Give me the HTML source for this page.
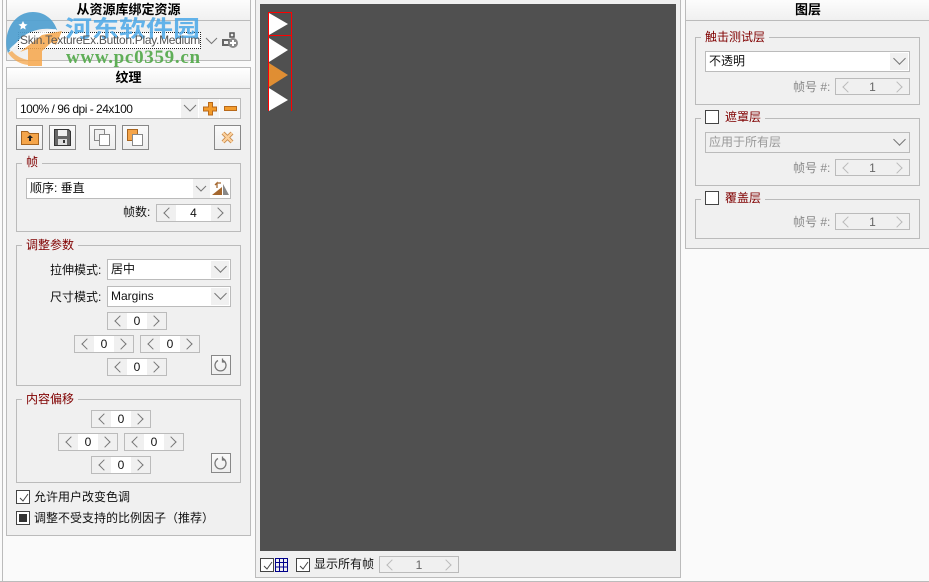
<!DOCTYPE html>
<html><head><meta charset="utf-8"><style>
html,body{margin:0;padding:0;width:929px;height:582px;overflow:hidden;background:#fafafa}
body{position:relative;font:12px/16px "Liberation Sans","Noto Sans CJK SC",sans-serif;color:#111}
div,span,svg{position:absolute;box-sizing:border-box}
.p{background:#f0f0f0;border:1px solid #bbb}
.h{background:linear-gradient(#fff,#f0f0f0);border-bottom:1px solid #bbb;text-align:center;font-weight:bold;font-size:13px;left:0;right:0;color:#000}
.g{border:1px solid #bbb}
.l{color:#800000;background:#f0f0f0;padding:0 4px;white-space:nowrap;line-height:14px}
.c{background:#fff;border:1px solid #bbb;padding-left:3px;line-height:19px;white-space:nowrap}
.c i{position:absolute;right:1px;top:1px;bottom:1px;width:18px;background:#f0f0f0}
.c i:after,.s b:after,.s u:after{content:"";position:absolute;border:solid #777;border-width:0 0 1px 1px}
.c i:after{left:5px;top:1px;width:8px;height:8px;transform:rotate(-45deg)}
.s{background:#fff;border:1px solid #bbb;text-align:center;line-height:17px;font-size:12px}
.s b,.s u{position:absolute;top:0;bottom:0;width:19px;background:#f0f0f0}
.s b{left:0}.s u{right:0}
.s b:after{left:8px;top:4px;width:7px;height:7px;transform:rotate(45deg)}
.s u:after{left:3px;top:4px;width:7px;height:7px;transform:rotate(-135deg)}
.d{background:#f0f0f0;color:#666}.d b:after,.d u:after{border-color:#bbb}
.t{white-space:nowrap;line-height:16px}
.gy{color:#888}
.b{background:linear-gradient(#fafafa,#eee);border:1px solid #888}
.k{background:#fff;border:1px solid #444;width:14px;height:14px}
.k svg{left:1px;top:1px}
</style></head><body>

<div style="left:2px;top:-2px;width:1px;height:584px;background:#bbb"></div>
<div style="left:0;top:581px;width:929px;height:1px;background:#bbb"></div>
<div class="p" style="left:6px;top:-5px;width:245px;height:66px"><div class="h" style="top:0;height:25px;padding-top:6px">从资源库绑定资源</div></div>
<div style="left:18px;top:32px;width:183px;height:17px;border:1px dotted #222;background:#fff"></div>
<div style="left:204px;top:32px;width:16px;height:17px;background:#f0f0f0"></div>
<svg style="left:204px;top:31px" width="40" height="20" fill="none"><path d="M2 7l5.500 5.500L13 7" stroke="#777"/><rect x="19" y="9" width="6" height="5" stroke="#666" stroke-width="2"/><rect x="26" y="2" width="4" height="4" stroke="#555" stroke-width="1.500"/><circle cx="29" cy="12" r="5" fill="#888"/><path d="M26 12h6M29 9v6" stroke="#fff" stroke-width="2"/></svg>

<div class="p" style="left:6px;top:67px;width:245px;height:469px"><div class="h" style="top:0;height:21px;padding-top:2px">纹理</div></div>

<div class="c" style="left:16px;top:98px;width:225px;height:21px;letter-spacing:-.5px;line-height:20px">100% / 96 dpi - 24x100</div>
<div style="left:181px;top:99px;width:17px;height:19px;background:#f0f0f0"></div>
<div style="left:199px;top:99px;width:20px;height:19px;background:#f5f5f5"></div>
<div style="left:220px;top:99px;width:20px;height:19px;background:#f5f5f5"></div>
<svg style="left:183px;top:102px" width="58" height="14" fill="none"><path d="M1 3l6 6 6-6" stroke="#777"/><path d="M25.500.5h4v4.500h4v4h-4v4h-4v-4h-5v-4h5z" fill="#f39c2c" stroke="#b8691a"/><rect x="41.500" y="4.500" width="12" height="4" fill="#f39c2c" stroke="#b8691a"/></svg>

<div class="b" style="left:16px;top:125px;width:27px;height:25px"></div>
<svg style="left:21px;top:131px" width="18" height="15"><path d="M.5 .5h6l2 2h9v11H.5z" fill="#f5a54a" stroke="#a8651f"/><path d="M9 4l3 3h-2v3H8V7H6z" fill="#222"/></svg>
<div class="b" style="left:49px;top:125px;width:27px;height:25px"></div>
<svg style="left:54px;top:129px" width="17" height="17"><path d="M.5.5h14l2 2v14H.5z" fill="#666" stroke="#333"/><rect x="4" y="1" width="9" height="6" fill="#f0f0f0"/><rect x="4" y="10" width="9" height="6" fill="#ddd"/><rect x="9" y="11" width="2" height="3" fill="#333"/></svg>
<div class="b" style="left:89px;top:125px;width:27px;height:25px"></div>
<svg style="left:94px;top:129px" width="16" height="17"><rect x=".5" y=".5" width="10" height="11" fill="#f0f0f0" stroke="#888"/><rect x="5.500" y="5.500" width="10" height="11" fill="#fff" stroke="#888"/></svg>
<div class="b" style="left:122px;top:125px;width:27px;height:25px"></div>
<svg style="left:127px;top:129px" width="16" height="17"><rect x=".5" y=".5" width="10" height="11" fill="#f5a54a" stroke="#a8651f"/><rect x="5.500" y="5.500" width="10" height="11" fill="#fff" stroke="#888"/></svg>
<div class="b" style="left:214px;top:125px;width:27px;height:25px"></div>
<svg style="left:221px;top:131px" width="13" height="13"><path d="M2 2l9 9M11 2l-9 9" stroke="#c08040" stroke-width="4"/><path d="M2 2l9 9M11 2l-9 9" stroke="#fbd09c" stroke-width="2.400"/></svg>

<div class="g" style="left:16px;top:163px;width:225px;height:69px"></div>
<div class="l" style="left:22px;top:155px">帧</div>
<div class="c" style="left:26px;top:178px;width:205px;height:21px">顺序: 垂直</div>
<div style="left:193px;top:179px;width:17px;height:19px;background:#f0f0f0"></div>
<svg style="left:195px;top:180px" width="36" height="17" fill="none"><path d="M1 6l5 5 5-5" stroke="#777"/><path d="M17 15l10-8v8z" fill="#a5682f"/><path d="M28 4l6 11h-6z" fill="#888"/><path d="M22 8V3l-2 2m2-2h4" stroke="#a5682f" stroke-width="1.300"/></svg>
<div class="t" style="left:123px;top:204px">帧数:</div>
<div class="s" style="left:156px;top:204px;width:75px;height:18px"><b></b><u></u>4</div>

<div class="g" style="left:16px;top:245px;width:225px;height:141px"></div>
<div class="l" style="left:22px;top:238px">调整参数</div>
<div class="t" style="left:50px;top:262px">拉伸模式:</div>
<div class="c" style="left:107px;top:259px;width:124px;height:21px">居中<i></i></div>
<div class="t" style="left:50px;top:289px">尺寸模式:</div>
<div class="c" style="left:107px;top:286px;width:124px;height:21px">Margins<i></i></div>
<div class="s" style="left:107px;top:312px;width:60px;height:18px"><b></b><u></u>0</div>
<div class="s" style="left:74px;top:335px;width:60px;height:18px"><b></b><u></u>0</div>
<div class="s" style="left:140px;top:335px;width:60px;height:18px"><b></b><u></u>0</div>
<div class="s" style="left:107px;top:358px;width:60px;height:18px"><b></b><u></u>0</div>
<div class="b" style="left:211px;top:355px;width:20px;height:20px"></div>
<svg style="left:214px;top:358px" width="14" height="14" fill="none"><path d="M4 2.500a5.500 5.500 0 1 0 5 0M8.500 .5v3.500h3" stroke="#777" stroke-width="1.300"/></svg>

<div class="g" style="left:16px;top:399px;width:225px;height:84px"></div>
<div class="l" style="left:22px;top:392px">内容偏移</div>
<div class="s" style="left:91px;top:410px;width:60px;height:18px"><b></b><u></u>0</div>
<div class="s" style="left:58px;top:433px;width:60px;height:18px"><b></b><u></u>0</div>
<div class="s" style="left:124px;top:433px;width:60px;height:18px"><b></b><u></u>0</div>
<div class="s" style="left:91px;top:456px;width:60px;height:18px"><b></b><u></u>0</div>
<div class="b" style="left:211px;top:453px;width:20px;height:20px"></div>
<svg style="left:214px;top:456px" width="14" height="14" fill="none"><path d="M4 2.500a5.500 5.500 0 1 0 5 0M8.500 .5v3.500h3" stroke="#777" stroke-width="1.300"/></svg>

<div class="k" style="left:16px;top:490px"><svg width="12" height="12" fill="none"><path d="M2 6l3 3 5-7" stroke="#444"/></svg></div>
<div class="t" style="left:34px;top:489px">允许用户改变色调</div>
<div class="k" style="left:16px;top:511px"><div style="left:2px;top:2px;width:8px;height:8px;background:#333"></div></div>
<div class="t" style="left:34px;top:510px">调整不受支持的比例因子（推荐）</div>

<div style="left:255px;top:-2px;width:426px;height:580px;border:1px solid #bbb;background:#f0f0f0"></div>
<div style="left:260px;top:4px;width:416px;height:547px;background:#505050"></div>
<svg style="left:260px;top:4px" width="60" height="112"><path d="M9 9l19 11L9 31z" fill="#fff"/><path d="M9 34l19 12L9 58z" fill="#fff"/><path d="M9 59l19 12L9 83z" fill="#e08e33"/><path d="M9 84l19 12L9 107z" fill="#fff"/><path d="M8.500 8.500h23v23h-23zM8.500 31v76M31.500 31v76" fill="none" stroke="#f00"/></svg>
<div class="k" style="left:260px;top:558px"><svg width="12" height="12" fill="none"><path d="M2 6l3 3 5-7" stroke="#444"/></svg></div>
<svg style="left:275px;top:558px" width="13" height="14" fill="none" stroke="#00008b"><path d="M.5.500h12v13H.5zM4.500.500v13M8.500.500v13M.5 4.500h12M.5 9h12"/></svg>
<div class="k" style="left:296px;top:558px"><svg width="12" height="12" fill="none"><path d="M2 6l3 3 5-7" stroke="#444"/></svg></div>
<div class="t" style="left:314px;top:556px">显示所有帧</div>
<div class="s d" style="left:379px;top:556px;width:80px;height:17px;line-height:16px"><b></b><u></u>1</div>

<div class="p" style="left:685px;top:-5px;width:246px;height:254px"><div class="h" style="top:0;height:25px;padding-top:6px">图层</div></div>

<div class="g" style="left:695px;top:37px;width:225px;height:68px"></div>
<div class="l" style="left:701px;top:30px">触击测试层</div>
<div class="c" style="left:705px;top:51px;width:205px;height:21px">不透明<i></i></div>
<div class="t gy" style="left:793px;top:79px">帧号 #:</div>
<div class="s d" style="left:835px;top:78px;width:75px;height:17px;line-height:16px"><b></b><u></u>1</div>

<div class="g" style="left:695px;top:118px;width:225px;height:68px"></div>
<div class="l" style="left:701px;top:110px;padding-left:24px">遮罩层</div>
<div class="k" style="left:705px;top:110px"></div>
<div class="c d" style="left:705px;top:132px;width:205px;height:21px;color:#999">应用于所有层<i></i></div>
<div class="t gy" style="left:793px;top:160px">帧号 #:</div>
<div class="s d" style="left:835px;top:159px;width:75px;height:17px;line-height:16px"><b></b><u></u>1</div>

<div class="g" style="left:695px;top:199px;width:225px;height:40px"></div>
<div class="l" style="left:701px;top:191px;padding-left:24px">覆盖层</div>
<div class="k" style="left:705px;top:191px"></div>
<div class="t gy" style="left:793px;top:214px">帧号 #:</div>
<div class="s d" style="left:835px;top:213px;width:75px;height:17px;line-height:16px"><b></b><u></u>1</div>

<svg style="left:0;top:0" width="66" height="70"><path d="M8 53C2 36 12 12 33 12c12 0 21 8 24 18-16-4-34 2-43 16z" fill="#4f9fd0" opacity=".92"/><path d="M10 50c8-10 28-18 46-20" fill="none" stroke="#fff" stroke-width="2" opacity=".8"/><path d="M8 53c5 7 12 11 20 12v-5c-6-1-12-4-16-9z" fill="#f6a64a" opacity=".75"/><path d="M28 66V49l-8 3 22-17 20-4-6 14-4-3-10 9v15z" fill="#f6a64a" opacity=".85"/><path d="M23 21l1.500 3 3 .5-2.500 2 .7 3-2.700-1.500-2.700 1.500.7-3-2.500-2 3-.5z" fill="#fff"/></svg>
<div style="left:65px;top:9px;font:bold 27px/36px 'Noto Sans CJK SC',sans-serif;color:#4aa8e8;opacity:.85;white-space:nowrap;transform:scaleY(.85);transform-origin:left center">河东软件园</div>
<div style="left:66px;top:48px;font:bold 19px/20px 'Liberation Serif',serif;color:#5fae57;white-space:nowrap;letter-spacing:.7px">www.pc0359.cn</div>
<div style="left:20px;top:32px;width:181px;height:17px;color:#555;line-height:17px;white-space:nowrap;overflow:hidden;letter-spacing:-.3px">Skin.TextureEx.Button.Play.Medium</div>
</body></html>
